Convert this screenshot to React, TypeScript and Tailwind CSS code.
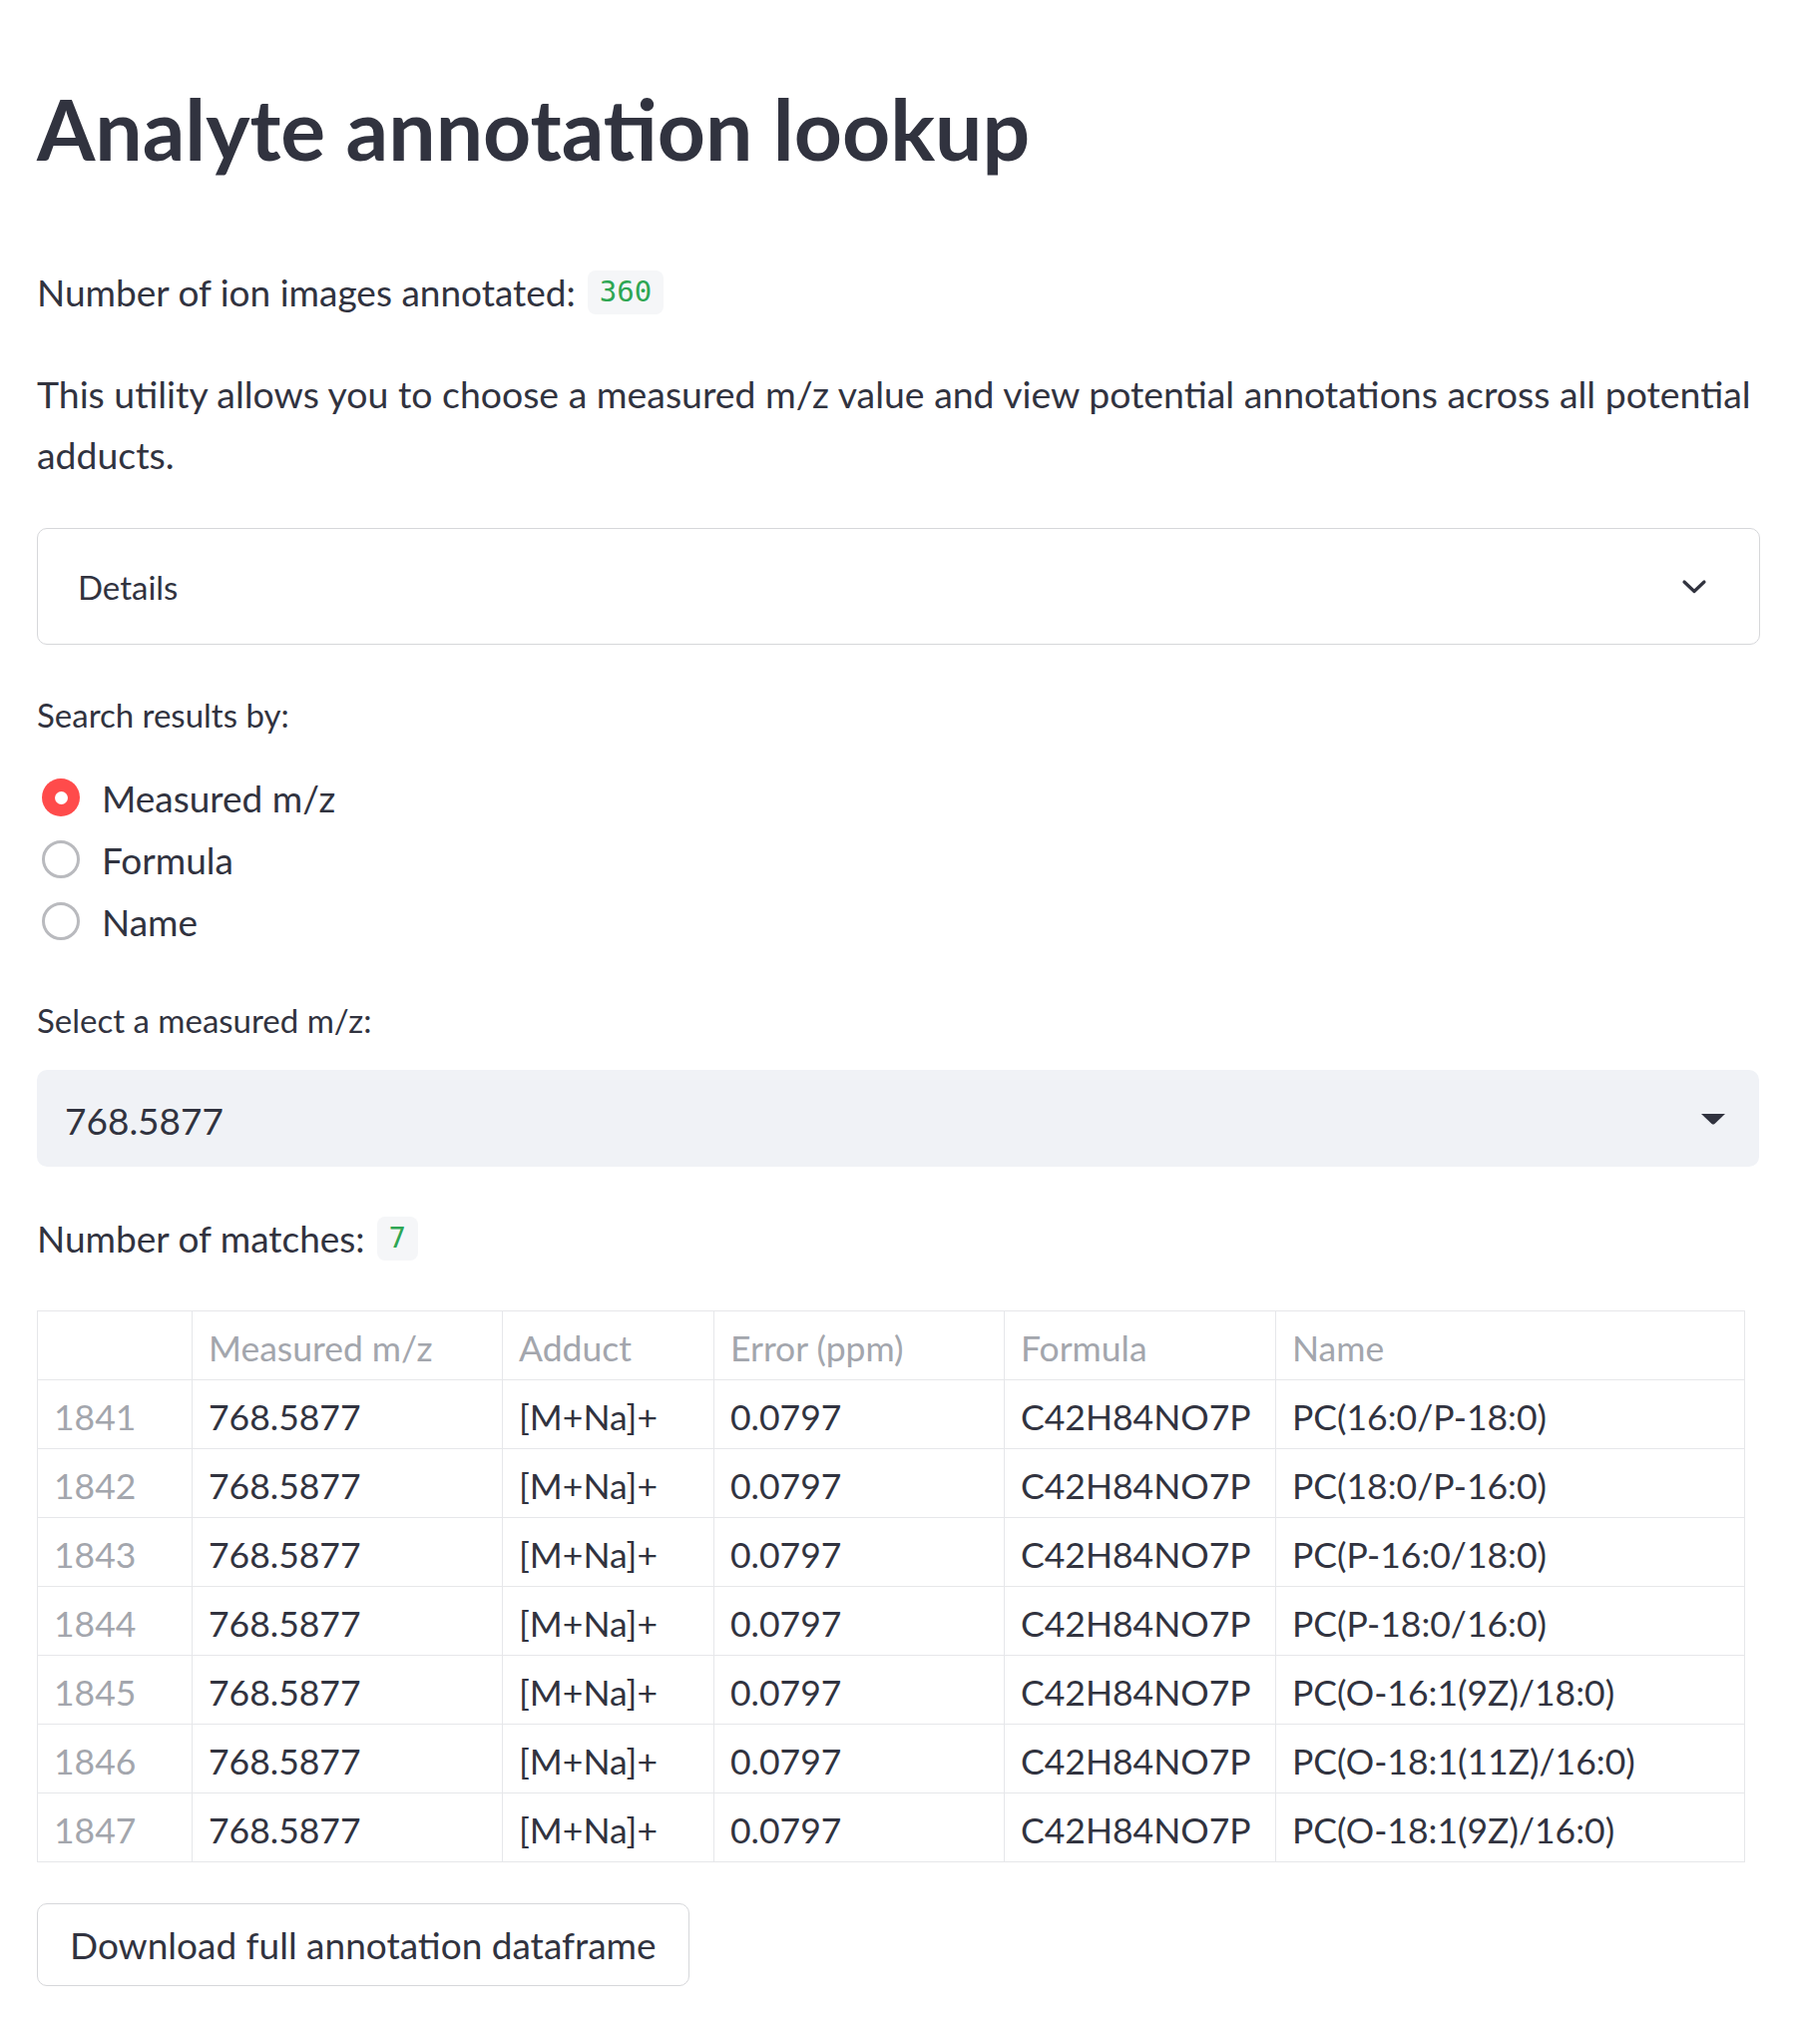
import React from "react";

const rows = [
  ["1841", "PC(16:0/P-18:0)"],
  ["1842", "PC(18:0/P-16:0)"],
  ["1843", "PC(P-16:0/18:0)"],
  ["1844", "PC(P-18:0/16:0)"],
  ["1845", "PC(O-16:1(9Z)/18:0)"],
  ["1846", "PC(O-18:1(11Z)/16:0)"],
  ["1847", "PC(O-18:1(9Z)/16:0)"],
];

function Radio({ label, checked }: { label: string; checked?: boolean }) {
  return (
    <div className="flex h-[62px] items-center">
      {checked ? (
        <div className="ml-[5px] flex h-[38px] w-[38px] items-center justify-center rounded-full bg-[#ff4b4b]">
          <div className="h-[13px] w-[13px] rounded-full bg-white" />
        </div>
      ) : (
        <div className="ml-[5px] h-[38px] w-[38px] rounded-full border-[3px] border-[#b9babe] bg-white" />
      )}
      <span className="ml-[22px] text-[37px] leading-[61px] text-[#31333f]">{label}</span>
    </div>
  );
}

function Code({ children }: { children: React.ReactNode }) {
  return (
    <span
      className="ml-[12px] inline-flex h-[44px] items-center rounded-[8px] bg-[#f5f6f8] px-[12px] text-[29px] text-[#2ea653]"
      style={{ fontFamily: '"DejaVu Sans Mono", "Liberation Mono", monospace' }}
    >
      {children}
    </span>
  );
}

const cell = "border border-[#e6e7ea] px-[16px] pt-[5px]";

export default function App() {
  return (
    <div
      className="min-h-[2048px] w-[1799px] bg-white pl-[37px] pr-[35px] text-[#31333f]"
      style={{ fontFamily: 'Lato, "Noto Sans", sans-serif' }}
    >
      <h1 className="pt-[79px] text-[84px] font-bold leading-[100px] text-[#31333f]">
        Analyte annotation lookup
      </h1>

      <div className="mt-[83px] flex h-[61px] items-center text-[37px] leading-[61px]">
        <span>Number of ion images annotated:</span>
        <Code>360</Code>
      </div>

      <p className="mt-[41px] text-[37.4px] leading-[61px]">
        This utility allows you to choose a measured m/z value and view potential annotations across all potential
        adducts.
      </p>

      <div className="mt-[43px] flex h-[117px] w-[1727px] items-center justify-between rounded-[10px] border border-[#d6d7da] pl-[40px] pr-[52px]">
        <span className="text-[33px] leading-[40px]">Details</span>
        <svg width="26" height="16" viewBox="0 0 26 16" fill="none">
          <path d="M3 3 L13 12.5 L23 3" stroke="#31333f" strokeWidth="3.2" strokeLinecap="round" strokeLinejoin="round" />
        </svg>
      </div>

      <div className="mt-[50px] text-[33px] leading-[40px]">Search results by:</div>

      <div className="mt-[32px] flex flex-col">
        <Radio label="Measured m/z" checked />
        <Radio label="Formula" />
        <Radio label="Name" />
      </div>

      <div className="mt-[48px] text-[33px] leading-[40px]">Select a measured m/z:</div>

      <div className="mt-[30px] flex h-[97px] w-[1726px] items-center justify-between rounded-[10px] bg-[#f0f2f6] pl-[28px] pr-[33px]">
        <span className="pt-[3px] text-[37px] leading-[61px]">768.5877</span>
        <svg width="26" height="12" viewBox="0 0 26 12">
          <path d="M1 1 H25 L14.5 11 Q13 12 11.5 11 Z" fill="#31333f" />
        </svg>
      </div>

      <div className="mt-[41px] flex h-[61px] items-center text-[37px] leading-[61px]">
        <span>Number of matches:</span>
        <Code>7</Code>
      </div>

      <table className="mt-[42px] w-[1711px] table-fixed border-collapse text-[35.5px]">
        <colgroup>
          <col className="w-[155px]" />
          <col className="w-[311px]" />
          <col className="w-[212px]" />
          <col className="w-[291px]" />
          <col className="w-[272px]" />
          <col className="w-[470px]" />
        </colgroup>
        <thead>
          <tr className="h-[69px]">
            {["", "Measured m/z", "Adduct", "Error (ppm)", "Formula", "Name"].map((h, i) => (
              <th key={i} className={`${cell} text-left font-normal text-[#a3a6ad]`}>
                {h}
              </th>
            ))}
          </tr>
        </thead>
        <tbody>
          {rows.map(([idx, name]) => (
            <tr key={idx} className="h-[69px]">
              <th className={`${cell} text-left font-normal text-[#a3a6ad]`}>{idx}</th>
              <td className={cell}>768.5877</td>
              <td className={cell}>[M+Na]+</td>
              <td className={cell}>0.0797</td>
              <td className={cell}>C42H84NO7P</td>
              <td className={cell}>{name}</td>
            </tr>
          ))}
        </tbody>
      </table>

      <button className="mt-[41px] flex h-[83px] items-center rounded-[10px] border border-[#d6d7da] bg-white px-[32px] text-[37px] leading-[61px] text-[#31333f]">
        Download full annotation dataframe
      </button>
    </div>
  );
}
